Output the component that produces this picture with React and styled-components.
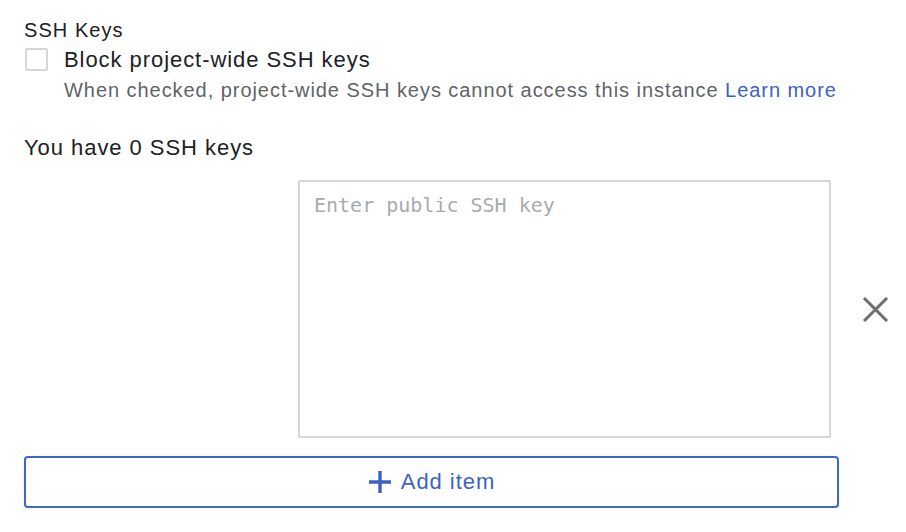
import React, { useState } from 'react';
import styled, { createGlobalStyle } from 'styled-components';

const Global = createGlobalStyle`
  body {
    margin: 0;
    background: #fff;
    font-family: "Liberation Sans", Arial, sans-serif;
    color: #202124;
  }
`;

const Page = styled.div`
  padding: 18px 0 0 24px;
  width: 815px;
`;

const Heading = styled.div`
  font-size: 20px;
  line-height: 24px;
  letter-spacing: 1.05px;
  color: #202124;
`;

const CheckRow = styled.label`
  display: grid;
  grid-template-columns: 23px 1fr;
  column-gap: 17px;
  margin-top: 4px;
  cursor: pointer;
`;

const Box = styled.input`
  appearance: none;
  width: 23px;
  height: 23px;
  margin: 2px 0 0 1px;
  border: 2px solid #d6d6d6;
  border-radius: 2px;
  background: #fff;
  &:checked {
    background: #3f67c4;
    border-color: #3f67c4;
  }
`;

const CheckLabel = styled.div`
  font-size: 22px;
  line-height: 28px;
  letter-spacing: 0.94px;
  color: #202124;
`;

const Hint = styled.div`
  grid-column: 2;
  font-size: 20px;
  line-height: 26px;
  letter-spacing: 0.95px;
  color: #5f6368;
  margin-top: 3px;
`;

const Link = styled.a`
  color: #3b62c2;
  text-decoration: none;
`;

const Count = styled.div`
  margin-top: 32px;
  font-size: 22px;
  line-height: 26px;
  letter-spacing: 0.95px;
  color: #202124;
`;

const KeyRow = styled.div`
  display: grid;
  grid-template-columns: 274px 533px 1fr;
  align-items: center;
  margin-top: 19px;
`;

const KeyInput = styled.textarea`
  grid-column: 2;
  box-sizing: border-box;
  width: 533px;
  height: 258px;
  border: 2px solid #d6d6d6;
  border-radius: 1px;
  padding: 10px 14px;
  resize: none;
  font-family: "DejaVu Sans Mono", "Liberation Mono", monospace;
  font-size: 20px;
  line-height: 26px;
  color: #202124;
  outline: none;
  &::placeholder {
    color: #a8abae;
  }
`;

const RemoveButton = styled.button`
  margin-left: 31px;
  width: 27px;
  height: 27px;
  padding: 0;
  border: 0;
  background: none;
  cursor: pointer;
  display: flex;
  align-items: center;
  justify-content: center;
`;

const AddButton = styled.button`
  margin-top: 18px;
  box-sizing: border-box;
  width: 815px;
  height: 52px;
  border: 2px solid #3f67c4;
  border-radius: 4px;
  background: #fff;
  color: #3b62c2;
  font-family: "Liberation Sans", Arial, sans-serif;
  font-size: 22px;
  letter-spacing: 0.94px;
  display: flex;
  align-items: center;
  justify-content: center;
  gap: 9px;
  cursor: pointer;
  box-shadow: 0 1px 3px rgba(63, 103, 196, 0.15);
`;

const CloseIcon = () => (
  <svg width="27" height="25" viewBox="0 0 27 25">
    <path d="M2 1 L25 24 M25 1 L2 24" stroke="#6e6e6e" strokeWidth="3" />
  </svg>
);

const PlusIcon = () => (
  <svg width="24" height="24" viewBox="0 0 24 24">
    <path d="M12 1 V23 M1 12 H23" stroke="#3b62c2" strokeWidth="3.4" />
  </svg>
);

export default function App() {
  const [keys, setKeys] = useState(['']);

  return (
    <>
      <Global />
      <Page>
        <Heading>SSH Keys</Heading>
        <CheckRow>
          <Box type="checkbox" />
          <CheckLabel>Block project-wide SSH keys</CheckLabel>
          <Hint>
            When checked, project-wide SSH keys cannot access this instance{' '}
            <Link href="#">Learn more</Link>
          </Hint>
        </CheckRow>
        <Count>You have 0 SSH keys</Count>
        {keys.map((k, i) => (
          <KeyRow key={i}>
            <KeyInput placeholder="Enter public SSH key" defaultValue={k} />
            <RemoveButton aria-label="Remove">
              <CloseIcon />
            </RemoveButton>
          </KeyRow>
        ))}
        <AddButton onClick={() => setKeys([...keys, ''])}>
          <PlusIcon />
          Add item
        </AddButton>
      </Page>
    </>
  );
}
